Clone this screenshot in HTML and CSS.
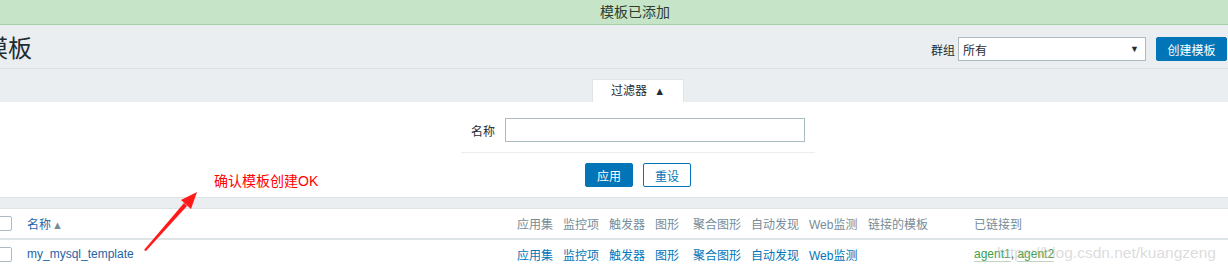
FILE: index.html
```html
<!DOCTYPE html>
<html lang="zh">
<head>
<meta charset="utf-8">
<title>模板</title>
<link rel="stylesheet" href="styles.css">
</head>
<body>
<div class="msg">模板已添加</div>
<header class="page-head">
  <h1 class="title">模板</h1>
  <div class="controls">
    <span class="ctl-label">群组</span>
    <div class="select"><span>所有</span><span class="caret">▼</span></div>
    <button class="btn-primary wide">创建模板</button>
  </div>
</header>
<div class="tabs"><div class="tab">过滤器 <span class="tri">▲</span></div></div>
<section class="filter">
  <div class="f-row"><span class="f-label">名称</span><div class="input"></div></div>
  <div class="sep"></div>
  <div class="f-buttons">
    <button class="btn-primary">应用</button>
    <button class="btn-alt">重设</button>
  </div>
</section>
<div class="gap"></div>
<div class="list">
  <div class="row head">
    <div class="c-check"><span class="checkbox"></span></div>
    <div class="c-name"><span class="sort">名称</span><span class="sort-tri">▲</span></div>
    <div>应用集</div><div>监控项</div><div>触发器</div><div>图形</div><div>聚合图形</div><div>自动发现</div><div>Web监测</div><div>链接的模板</div><div>已链接到</div>
  </div>
  <div class="row body">
    <div class="c-check"><span class="checkbox"></span></div>
    <div class="c-name"><a class="name-link">my_mysql_template</a></div>
    <div><a>应用集</a></div><div><a>监控项</a></div><div><a>触发器</a></div><div><a>图形</a></div><div><a>聚合图形</a></div><div><a>自动发现</a></div><div><a>Web监测</a></div><div></div>
    <div><a class="green">agent1</a>, <a class="green">agent2</a></div>
  </div>
</div>
<div class="note">确认模板创建OK</div>
<svg class="arrow" width="1228" height="268" viewBox="0 0 1228 268">
  <polygon points="144,250 146,251 187,206 184,203" fill="#ff1a1a"/>
  <polygon points="197,192 181,200 191,209" fill="#ff1a1a"/>
</svg>
<div class="watermark">https://blog.csdn.net/kuangzeng</div>
</body>
</html>
```
FILE: styles.css
```css
html, body {
  margin: 0;
  padding: 0;
}
body {
  width: 1228px;
  height: 268px;
  overflow: hidden;
  position: relative;
  background: #ebeef0;
  font-family: "Liberation Sans", Arial, "Noto Sans CJK SC", sans-serif;
  font-size: 12px;
  color: #1f2c33;
}
.msg {
  height: 25px;
  box-sizing: border-box;
  border-bottom: 1px solid #a7d0aa;
  background: #c6e4c7;
  padding-left: 42px;
  text-align: center;
  font-size: 14px;
  line-height: 24px;
  color: #2f3d30;
}
.page-head {
  height: 44px;
  box-sizing: border-box;
  padding: 12px 0 7px;
  border-bottom: 1px solid #dde2e5;
  display: flex;
  align-items: center;
  justify-content: space-between;
}
.title {
  margin: 0 0 0 -16px;
  font-size: 24px;
  line-height: 24px;
  font-weight: normal;
  color: #1f2c33;
}
.controls {
  display: flex;
  align-items: center;
}
.ctl-label {
  margin-right: 3px;
}
.select {
  width: 188px;
  height: 24px;
  box-sizing: border-box;
  border: 1px solid #acbbc2;
  background: #fff;
  display: flex;
  align-items: center;
  justify-content: space-between;
  padding: 0 6px 0 4px;
  margin-right: 10px;
}
.caret {
  font-size: 9px;
  color: #1f2c33;
}
button {
  font-family: inherit;
  font-size: 12px;
  height: 24px;
  box-sizing: border-box;
  border-radius: 2px;
  padding: 0;
  cursor: pointer;
}
.btn-primary {
  background: #0275b8;
  border: 1px solid #0275b8;
  color: #fff;
  width: 48px;
}
.btn-primary.wide {
  width: 71px;
  margin-right: 1px;
}
.btn-alt {
  background: #fff;
  border: 1px solid #0275b8;
  color: #0275b8;
  width: 48px;
}
.tabs {
  margin-top: 10px;
  padding-left: 48px;
  display: flex;
  justify-content: center;
}
.tab {
  width: 92px;
  height: 23px;
  box-sizing: border-box;
  border: 1px solid #dfe4e7;
  border-bottom: none;
  border-radius: 2px 2px 0 0;
  background: #fff;
  text-align: center;
  line-height: 22px;
  color: #1f2c33;
}
.tri {
  font-size: 11px;
  margin-left: 4px;
}
.filter {
  background: #fff;
  border-bottom: 1px solid #dfe4e7;
  padding: 16px 0 10px 48px;
  display: flex;
  flex-direction: column;
  align-items: center;
  gap: 10px;
}
.f-row {
  display: flex;
  align-items: center;
}
.f-label {
  margin-right: 10px;
}
.input {
  width: 300px;
  height: 24px;
  box-sizing: border-box;
  border: 1px solid #acbbc2;
  background: #fff;
}
.sep {
  width: 354px;
  height: 1px;
  background: #ebeef0;
}
.f-buttons {
  display: flex;
  gap: 10px;
}
.gap {
  height: 10px;
}
.list {
  background: #fff;
  border-top: 1px solid #dfe4e7;
}
.row {
  display: grid;
  grid-template-columns: 27px 490px 46px 46px 46px 38px 58px 58px 59px 106px 1fr;
  align-items: center;
}
.row.head {
  height: 29px;
  border-bottom: 2px solid #dfe4e7;
  color: #768d99;
}
.row.body {
  height: 28px;
}
.checkbox {
  display: block;
  width: 15px;
  height: 15px;
  box-sizing: border-box;
  border: 1px solid #acbbc2;
  border-radius: 2px;
  margin-left: -3px;
  background: #fff;
}
.sort {
  color: #1f65a6;
}
.sort-tri {
  font-size: 11px;
  color: #768d99;
  margin-left: 1px;
}
a {
  color: #0275b8;
  text-decoration: none;
}
.name-link {
  color: #1f65a6;
}
a.green {
  color: #429e47;
  border-bottom: 1px solid #c3d4c4;
}
.note {
  position: absolute;
  left: 214px;
  top: 171px;
  font-size: 14px;
  line-height: 20px;
  color: #ff0000;
}
.arrow {
  position: absolute;
  left: 0;
  top: 0;
  pointer-events: none;
}
.watermark {
  position: absolute;
  left: 997px;
  top: 243px;
  font-size: 15.5px;
  line-height: 20px;
  color: rgba(190, 190, 190, 0.55);
}
```
